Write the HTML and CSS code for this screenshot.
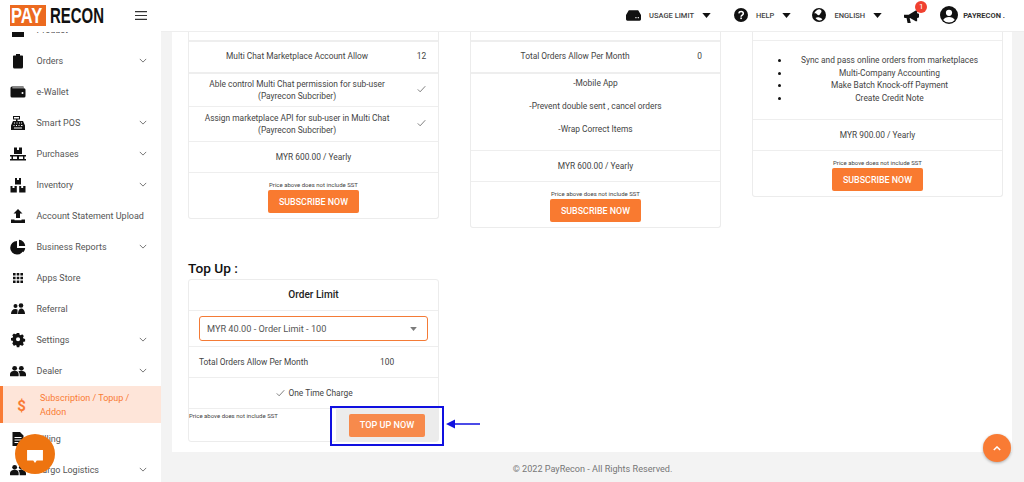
FILE: index.html
```html
<!DOCTYPE html>
<html lang="en">
<head>
<meta charset="utf-8">
<title>PayRecon - Subscription</title>
<link rel="stylesheet" href="styles.css">
</head>
<body>
<svg class="sprite" aria-hidden="true">
  <symbol id="chev" viewBox="0 0 10 6"><path d="M1 1l4 4 4-4" fill="none" stroke="#666" stroke-width="1.1"/></symbol>
  <symbol id="caret" viewBox="0 0 10 6"><path d="M0 0h10L5 6z" fill="#111"/></symbol>
  <symbol id="check" viewBox="0 0 12 10"><path d="M1 5.500l3.200 3.200L11 1.300" fill="none" stroke="#555" stroke-width="1"/></symbol>
  <symbol id="users" viewBox="0 0 24 16"><circle cx="7" cy="4" r="3.600"/><circle cx="17" cy="4" r="3.600"/><path d="M0 15v-2c0-3 2.500-5 5-5h4c2.500 0 4 2 4 5v2a1 1 0 0 1-1 1H1a1 1 0 0 1-1-1zM14.500 16c.3-3-.3-6-2-7.500 1-.4 2-.5 3-.5h3c3 0 5.500 2 5.500 5v2a1 1 0 0 1-1 1z"/></symbol>
</svg>

<div class="app">
  <aside class="sidebar">
    <div class="brand">
      <div class="logo"><span class="logo-pay"><span class="squeeze">PAY</span></span><span class="logo-recon"><span class="squeeze">RECON</span></span></div>
      <svg class="burger" viewBox="0 0 12 9"><path d="M0 .6h12M0 4.500h12M0 8.400h12" stroke="#333" stroke-width="1.100"/></svg>
    </div>
    <nav class="nav">
      <div class="nav-list">
        <a class="nav-item"><svg class="ni" viewBox="0 0 16 16"><rect x="2" y="2" width="12" height="13"/></svg><span class="nl">Product</span><svg class="chev"><use href="#chev"/></svg></a>
        <a class="nav-item"><svg class="ni" viewBox="0 0 16 16"><path d="M6 1h4v1.500h2.300a.7.7 0 0 1 .7.7V14a1.500 1.500 0 0 1-1.500 1.500h-7A1.500 1.500 0 0 1 3 14V3.200a.7.7 0 0 1 .7-.7H6z"/></svg><span class="nl">Orders</span><svg class="chev"><use href="#chev"/></svg></a>
        <a class="nav-item"><svg class="ni" viewBox="0 0 16 16"><path fill-rule="evenodd" d="M2 2.500h11a1 1 0 0 1 1 1H2.300v.7H14a1.500 1.500 0 0 1 1.500 1.500V12a1.500 1.500 0 0 1-1.500 1.500H2A1.500 1.500 0 0 1 .5 12V4A1.500 1.500 0 0 1 2 2.500zM12.500 8a1 1 0 1 0 0 2 1 1 0 0 0 0-2z"/></svg><span class="nl">e-Wallet</span></a>
        <a class="nav-item"><svg class="ni" viewBox="0 0 16 16"><path fill-rule="evenodd" d="M3 1h7v3.500H7.500V6H13l2 4.500V15H1v-4.500L3 6h3V4.500H3zM4 2v1.500h5V2zM4 7.500v1h1v-1zM6.500 7.500v1h1v-1zM9 7.500v1h1v-1zM11 7.500v1h1v-1zM3.500 10v1h1v-1zM6 10v1h1v-1zM8.500 10v1h1v-1zM11 10v1h1.500v-1zM4 12.500v1h8v-1z"/></svg><span class="nl">Smart POS</span><svg class="chev"><use href="#chev"/></svg></a>
        <a class="nav-item"><svg class="ni" viewBox="0 0 16 16"><path d="M4 1.500h3v2.500h2V1.500h3V8H4zM0 9h16v1.500h-1.500V13H16v1.500H0V13h1.500v-2.500H0zM3 10.500V13h4v-2.500zM9 10.500V13h4v-2.500z"/></svg><span class="nl">Purchases</span><svg class="chev"><use href="#chev"/></svg></a>
        <a class="nav-item"><svg class="ni" viewBox="0 0 16 16"><path d="M5 1h2v2h2V1h2v6.500H5zM.5 9h2v2h2V9h2.300v6.500H.5zM9.200 9h2v2h2V9h2.300v6.500H9.200z"/></svg><span class="nl">Inventory</span><svg class="chev"><use href="#chev"/></svg></a>
        <a class="nav-item"><svg class="ni" viewBox="0 0 16 16"><path d="M8 1l4.500 4.500H10V10H6V5.500H3.500zM1 11.500h3.500v.8h7v-.8H15V15H1z"/></svg><span class="nl">Account Statement Upload</span></a>
        <a class="nav-item"><svg class="ni" viewBox="0 0 16 16"><path d="M7 2a6.800 6.800 0 1 0 6.800 7H7zM9 .8V7h6.200A6.500 6.500 0 0 0 9 .8zM9 9l4.300 4.300A6.300 6.300 0 0 0 15.200 9z"/></svg><span class="nl">Business Reports</span><svg class="chev"><use href="#chev"/></svg></a>
        <a class="nav-item"><svg class="ni" viewBox="0 0 16 16"><path d="M3 3h2.600v2.600H3zM6.700 3h2.600v2.600H6.700zM10.400 3H13v2.600h-2.600zM3 6.700h2.600v2.600H3zM6.700 6.700h2.600v2.600H6.700zM10.400 6.700H13v2.600h-2.600zM3 10.400h2.600V13H3zM6.700 10.400h2.600V13H6.700zM10.400 10.400H13V13h-2.600z"/></svg><span class="nl">Apps Store</span></a>
        <a class="nav-item"><svg class="ni" viewBox="0 0 16 16"><circle cx="5.500" cy="5" r="2"/><circle cx="11" cy="4.500" r="2.300"/><path d="M1 13c0-3 1.500-5 4.500-5 1 0 1.500.2 2 .5V13zM8 13c0-3 1-5.500 3-5.500s4 2 4 5.500z"/></svg><span class="nl">Referral</span></a>
        <a class="nav-item"><svg class="ni" viewBox="0 0 16 16"><path fill-rule="evenodd" d="M6.500 1h3l.4 2 1.400.6 1.700-1.100 2.100 2.100-1.100 1.700.6 1.400 2 .4v3l-2 .4-.6 1.400 1.100 1.700-2.100 2.100-1.700-1.100-1.400.6-.4 2h-3l-.4-2-1.400-.6-1.700 1.100L.9 13.500 2 11.800l-.6-1.400-2-.4v-3l2-.4L2 5.200.9 3.500 3 1.400l1.700 1.100 1.400-.6zM8 6a2.500 2.500 0 1 0 0 5 2.500 2.500 0 0 0 0-5z" transform="translate(1.500 .3) scale(.82)"/></svg><span class="nl">Settings</span><svg class="chev"><use href="#chev"/></svg></a>
        <a class="nav-item"><svg class="ni ni-wide"><use href="#users"/></svg><span class="nl">Dealer</span><svg class="chev"><use href="#chev"/></svg></a>
        <a class="nav-item active"><span class="dollar">$</span><span class="nl">Subscription / Topup / Addon</span></a>
        <a class="nav-item"><svg class="ni" viewBox="0 0 16 16"><path fill-rule="evenodd" d="M2.500 1H10l3.500 3.500V15h-11zM4.500 6v1h7V6zM4.500 8.500v1h7v-1zM4.500 11v1h4v-1z"/></svg><span class="nl">Billing</span></a>
        <a class="nav-item"><svg class="ni ni-wide"><use href="#users"/></svg><span class="nl">Cargo Logistics</span><svg class="chev"><use href="#chev"/></svg></a>
      </div>
    </nav>
  </aside>

  <div class="main">
    <header class="topbar">
      <div class="tb-item tb-usage">
        <svg class="tb-icon tb-wide" viewBox="0 0 16 11"><path fill-rule="evenodd" d="M3 0h10l3 5v4.500a1.500 1.500 0 0 1-1.500 1.500h-13A1.500 1.500 0 0 1 0 9.500V5zM10 7v1.500h1.200V7zM12.500 7v1.500h1.200V7z"/></svg>
        <span class="tb-label">USAGE LIMIT</span><svg class="tb-caret"><use href="#caret"/></svg>
      </div>
      <div class="tb-item tb-help">
        <svg class="tb-icon" viewBox="0 0 14 14"><circle cx="7" cy="7" r="7"/><path d="M4.800 5.300C5 4 6 3.500 7.100 3.500c1.300 0 2.200.8 2.200 1.900 0 1.700-2.200 1.600-2.200 3.300" fill="none" stroke="#fff" stroke-width="1.500"/><rect x="6.300" y="9.500" width="1.600" height="1.600" fill="#fff"/></svg>
        <span class="tb-label">HELP</span><svg class="tb-caret"><use href="#caret"/></svg>
      </div>
      <div class="tb-item tb-lang">
        <svg class="tb-icon" viewBox="0 0 14 14"><circle cx="7" cy="7" r="7"/><path d="M7 1.200c-2 .5-4 2-4.800 4.300 1.500-.5 2.500.2 3.300 1.300.5.800 2 .5 2.500-.5.500-1.200 1.500-1.500 1.500-3 0-1-1-2-2.500-2.100zM3.500 10c1.500-1 3-.8 4.500-.3s2 .9 2.300 1.700c-1.900 1.500-4.900 1.500-6.800-1.400z" fill="#fff"/></svg>
        <span class="tb-label">ENGLISH</span><svg class="tb-caret"><use href="#caret"/></svg>
      </div>
      <div class="tb-bell">
        <svg class="tb-mega" viewBox="0 0 16 14"><path d="M0 4.500h5L12.500 0h1.500v3a2.500 2.500 0 0 1 0 5v3.500h-1.500L6.500 8H6l1.200 5.500H3.800L2.700 8H1a1 1 0 0 1-1-1z"/></svg>
        <span class="badge">1</span>
      </div>
      <div class="tb-user">
        <svg class="tb-avatar" viewBox="0 0 18 18"><circle cx="9" cy="9" r="9"/><circle cx="9" cy="6.800" r="3.100" fill="#fff"/><path d="M3.200 14c1-2.300 3.200-3.100 5.800-3.100s4.800.8 5.800 3.100a7.800 7.800 0 0 1-11.600 0z" fill="#fff"/></svg>
        <span class="tb-name">PAYRECON .</span>
      </div>
    </header>

    <main class="panel">
      <div class="plans">
        <section class="card">
          <div class="stub"></div>
          <div class="row row-kv row-h32"><span class="k k-narrow">Multi Chat Marketplace Account Allow</span><span class="v v-narrow">12</span></div>
          <div class="row row-kv row-h34"><span class="k k-narrow">Able control Multi Chat permission for sub-user<br>(Payrecon Subcriber)</span><span class="v v-narrow"><svg class="check"><use href="#check"/></svg></span></div>
          <div class="row row-kv row-h35"><span class="k k-narrow">Assign marketplace API for sub-user in Multi Chat<br>(Payrecon Subcriber)</span><span class="v v-narrow"><svg class="check"><use href="#check"/></svg></span></div>
          <div class="row row-price">MYR 600.00 / Yearly</div>
          <div class="row-buy"><p class="note">Price above does not include SST</p><button class="btn">SUBSCRIBE NOW</button></div>
        </section>
        <section class="card">
          <div class="stub"></div>
          <div class="row row-kv row-h32"><span class="k k-wide">Total Orders Allow Per Month</span><span class="v v-wide">0</span></div>
          <div class="row row-text"><p>-Mobile App</p><p>-Prevent double sent , cancel orders</p><p>-Wrap Correct Items</p></div>
          <div class="row row-price">MYR 600.00 / Yearly</div>
          <div class="row-buy"><p class="note">Price above does not include SST</p><button class="btn">SUBSCRIBE NOW</button></div>
        </section>
        <section class="card card-short">
          <div class="stub"></div>
          <div class="row row-list"><ul><li>Sync and pass online orders from marketplaces</li><li>Multi-Company Accounting</li><li>Make Batch Knock-off Payment</li><li>Create Credit Note</li></ul></div>
          <div class="row row-price">MYR 900.00 / Yearly</div>
          <div class="row-buy"><p class="note">Price above does not include SST</p><button class="btn">SUBSCRIBE NOW</button></div>
        </section>
      </div>

      <h2 class="section-title">Top Up :</h2>
      <section class="card card-topup">
        <div class="topup-title">Order Limit</div>
        <div class="row row-select"><div class="select"><span>MYR 40.00 - Order Limit - 100</span><svg class="select-caret"><use href="#caret"/></svg></div></div>
        <div class="row row-total"><span class="total-k">Total Orders Allow Per Month</span><span class="total-v">100</span></div>
        <div class="row row-price row-once"><svg class="check"><use href="#check"/></svg>One Time Charge</div>
        <div class="row row-action">
          <p class="note note-left">Price above does not include SST</p>
          <div class="action-cell">
            <button class="btn btn-topup">TOP UP NOW</button>
            <span class="annot-box"></span>
            <svg class="annot-arrow" viewBox="0 0 34 10"><path d="M0 5l9-4.500v3.800h25v1.400H9v3.800z" fill="#1010e0"/></svg>
          </div>
        </div>
      </section>
    </main>

    <footer class="footer">© 2022 PayRecon - All Rights Reserved.</footer>
  </div>

  <button class="chat" aria-label="Chat"><svg viewBox="0 0 20 17"><path d="M1 1h18v12h-7l-2 3-2-3H1z" fill="#fff"/></svg></button>
  <button class="to-top" aria-label="Back to top"><svg viewBox="0 0 10 6"><path d="M1 5l4-4 4 4" fill="none" stroke="#fff" stroke-width="1.800"/></svg></button>
</div>
</body>
</html>
```

FILE: styles.css
```css
* { box-sizing: border-box; }
html, body { margin: 0; height: 100%; overflow: hidden; }
body { font-family: Roboto, "Liberation Sans", sans-serif; font-size: 10px; color: #444; background: #f3f3f3; }
p { margin: 0; }
.sprite { display: none; }

.app { display: flex; height: 482px; width: 1024px; position: relative; }

/* Sidebar */
.sidebar { width: 161px; flex: none; background: #fff; display: flex; flex-direction: column; height: 100%; }
.brand { height: 32px; flex: none; display: flex; align-items: center; justify-content: space-between; padding: 0 14px 1px 10px; background: #fff; position: relative; z-index: 1; }
.logo { display: flex; align-items: center; height: 21px; font-family: "Liberation Sans", sans-serif; font-weight: 700; font-size: 22px; }
.logo-pay { display: block; background: #ec6a1f; color: #fff; height: 21px; line-height: 21px; width: 36px; flex: none; padding-left: 1px; white-space: nowrap; overflow: hidden; }
.logo-recon { display: block; color: #111; margin-left: 4px; width: 55px; line-height: 21px; flex: none; white-space: nowrap; }
.squeeze { display: inline-block; transform-origin: left center; }
.logo-recon .squeeze { transform: scaleX(.68); }
.logo-pay .squeeze { transform: scaleX(.75); }
.burger { width: 12px; height: 9px; }
.nav { flex: 1; overflow: hidden; }
.nav-list { margin-top: -18px; }
.nav-item { display: flex; align-items: center; height: 31px; padding: 0 14px 0 10px; color: #555; font-size: 9px; }
.ni { width: 16px; height: 16px; flex: none; fill: #111; }
.ni-wide { height: 12px; }
.nl { flex: 1; margin-left: 10.500px; white-space: nowrap; }
.chev { width: 8px; height: 5px; flex: none; margin-top: -1px; }
.nav-item.active { height: 37px; background: #fee5d9; border-left: 3px solid #f97b34; color: #f97b34; padding: 2px 14px 0; }
.active .nl { white-space: normal; margin-left: 14px; line-height: 13.500px; }
.dollar { font-size: 15px; font-weight: 700; width: 9px; text-align: center; flex: none; }

/* Main */
.main { flex: 1; min-width: 0; display: flex; flex-direction: column; height: 100%; }
.topbar { height: 32px; flex: none; background: #fff; border-bottom: 1px solid #eeeeee; display: flex; align-items: center; padding: 0 19px 1px 0; justify-content: flex-end; }
.tb-item { display: flex; align-items: center; }
.tb-usage { margin-right: 23px; }
.tb-help { margin-right: 21px; }
.tb-lang { margin-right: 22px; }
.tb-icon { width: 14px; height: 14px; fill: #111; flex: none; }
.tb-wide { width: 15px; height: 11px; }
.tb-label { font-size: 7.500px; font-weight: 500; color: #444; margin: 0 8px; white-space: nowrap; }
.tb-caret { width: 9px; height: 5px; }
.tb-bell { position: relative; width: 16px; height: 14px; margin-right: 20px; }
.tb-mega { width: 15px; height: 14px; fill: #111; display: block; margin-top: 2px; }
.badge { position: absolute; left: 11px; top: -7px; width: 12px; height: 12px; border-radius: 50%; background: #f0402f; color: #fff; font-size: 8px; line-height: 12px; text-align: center; }
.tb-user { display: flex; align-items: center; }
.tb-avatar { width: 18px; height: 18px; fill: #111; flex: none; }
.tb-name { font-size: 7.500px; font-weight: 700; color: #333; margin-left: 5px; white-space: nowrap; }

.panel { flex: 1; min-height: 0; overflow: hidden; margin: 0 12px 0 11px; background: #fff; padding: 0 9px 0 16px; }
.plans { display: grid; grid-template-columns: repeat(3, 251px); column-gap: 31px; align-items: start; height: 193px; }

.card { background: #fff; border: 1px solid #ececec; border-top: 0; border-radius: 0 0 3px 3px; text-align: center; font-size: 8.400px; color: #444; }
.stub { height: 8px; }
.row { border-top: 2px solid #eeeeee; display: flex; align-items: center; justify-content: center; }
.row-kv { justify-content: flex-start; }
.row-h32 { height: 32px; padding-bottom: 2px; }
.row-h34 { height: 34px; line-height: 12.500px; }
.row-h35 { height: 35px; border-top-width: 1px; line-height: 12.500px; }
.k-narrow { width: 217px; }
.v-narrow { width: 33px; text-align: center; }
.k-wide { width: 209px; }
.v-wide { width: 41px; text-align: center; }
.check { width: 9px; height: 8px; }
.row-price { height: 31px; border-top-width: 1px; }
.row-buy { border-top: 1px solid #eeeeee; padding-top: 8px; height: 46px; display: flex; flex-direction: column; align-items: center; }
.note { font-size: 6px; line-height: 8px; color: #444; }
.btn { border: 0; background: #f97a30; color: #fff; font-family: inherit; font-weight: 500; font-size: 8.900px; width: 91px; height: 23px; border-radius: 2px; margin-top: 1px; padding: 0; }
.row-text { height: 78px; flex-direction: column; justify-content: flex-start; padding-top: 3px; }
.row-text p { line-height: 13px; margin-bottom: 10px; }
.row-list { height: 79px; border-top-width: 1px; align-items: flex-start; justify-content: flex-start; }
.row-list ul { margin: 13px 0 0; padding: 0 13px 0 37px; width: 100%; line-height: 12.700px; }
.row-list li::marker { color: #111; }

.section-title { font-size: 13.700px; font-weight: 500; color: #111; margin: 35px 0 0; height: 17px; line-height: 17px; }
.card-topup { width: 251px; margin-top: 2px; border-top: 1px solid #ececec; border-radius: 3px; height: 163px; }
.topup-title { height: 30px; line-height: 30px; font-size: 10.100px; font-weight: 500; color: #222; }
.row-select { height: 36px; border-top-width: 1px; padding: 0 10px; }
.select { width: 100%; height: 25px; border: 1px solid #f47b36; border-radius: 3px; display: flex; align-items: center; justify-content: space-between; padding: 0 10px 0 7px; font-size: 9.200px; color: #555; }
.select-caret { width: 7px; height: 4px; opacity: .55; }
.row-total { height: 31px; border-top-width: 1px; justify-content: flex-start; padding-left: 10px; text-align: left; }
.total-k { width: 181px; }
.total-v { width: 20px; }
.row-once { gap: 3px; padding-left: 2px; }
.row-action { height: 33px; border-top-width: 1px; align-items: stretch; justify-content: space-between; text-align: left; }
.note-left { margin-top: 3px; }
.action-cell { position: relative; width: 102px; background: #ececec; display: flex; align-items: center; justify-content: center; }
.btn-topup { width: 76px; background: #f78a4c; margin: 0; font-size: 9.100px; }
.annot-box { position: absolute; left: -6px; top: -3px; width: 114px; height: 40px; border: 2px solid #1010e0; pointer-events: none; }
.annot-arrow { position: absolute; left: 110px; top: 10px; width: 34px; height: 10px; }

.footer { height: 30px; flex: none; background: #f3f3f3; text-align: center; line-height: 34px; font-size: 9.100px; color: #777; }

/* Floating buttons */
.chat { position: absolute; left: 15px; top: 434px; width: 40px; height: 40px; border: 0; border-radius: 50%; background: #ee7410; padding: 12px 11px 8px; }
.chat svg { display: block; width: 18px; height: 15px; }
.to-top { position: absolute; left: 983px; top: 434px; width: 28px; height: 28px; border: 0; border-radius: 50%; background: #f97b34; box-shadow: 0 1px 3px rgba(0,0,0,.3); padding: 0; display: flex; align-items: center; justify-content: center; }
.to-top svg { width: 8px; height: 5px; }
```
